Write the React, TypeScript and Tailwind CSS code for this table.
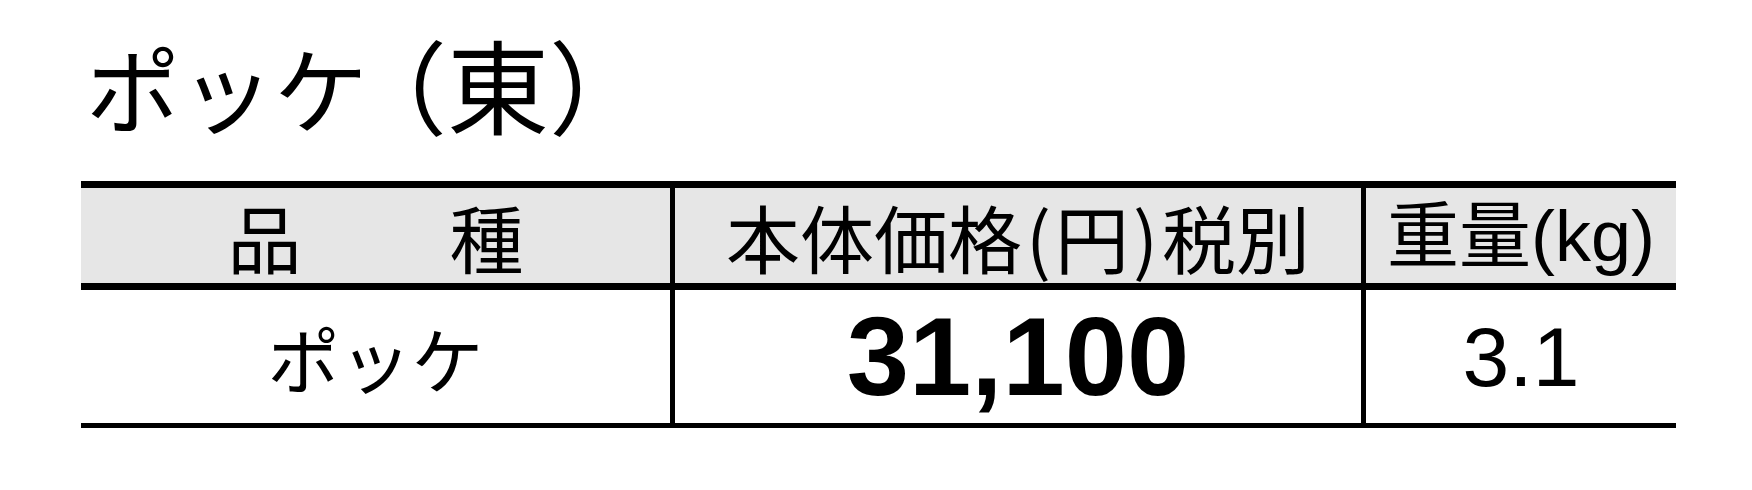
const JP = "font-['Noto_Sans_CJK_JP',sans-serif]";
const MIX = "font-['Liberation_Sans','Noto_Sans_CJK_JP',sans-serif]";

export default function App() {
  return (
    <div className="w-[1752px] h-[490px] bg-white text-black">
      <h1 className={`${JP} pl-[86px] pt-[32px] h-[181px] text-[94px] leading-none font-normal whitespace-nowrap`}>
        ポッケ
        <span className="ml-[28px] text-[102px] [font-feature-settings:'halt']">（東）</span>
      </h1>

      <div className="ml-[81px] w-[1595px] border-t-[7px] border-b-[5px] border-black">
        {/* header row */}
        <div className="flex h-[102px] bg-[#e6e6e6] border-b-[7px] border-black">
          <div className={`${JP} w-[594px] border-r-[5px] border-black flex items-center justify-center text-[74px] leading-none`}>
            品　　種
          </div>
          <div className={`${JP} w-[691px] border-r-[5px] border-black flex items-center justify-center text-[74px] leading-none`}>
            本体価格<span className="px-[4px]">(</span>円<span className="px-[4px]">)</span>税別
          </div>
          <div className={`${MIX} flex-1 flex items-center justify-center text-[72px] leading-none`}>
            重量(kg)
          </div>
        </div>

        {/* data row */}
        <div className="flex h-[133px]">
          <div className={`${JP} w-[594px] border-r-[5px] border-black flex items-center justify-center text-[72px] leading-none`}>
            ポッケ
          </div>
          <div className="w-[691px] border-r-[5px] border-black flex items-center justify-center font-['Liberation_Sans',sans-serif] font-bold text-[112px] leading-none">
            31,100
          </div>
          <div className="flex-1 flex items-center justify-center font-['Liberation_Sans',sans-serif] text-[84px] leading-none">
            3.1
          </div>
        </div>
      </div>
    </div>
  );
}
